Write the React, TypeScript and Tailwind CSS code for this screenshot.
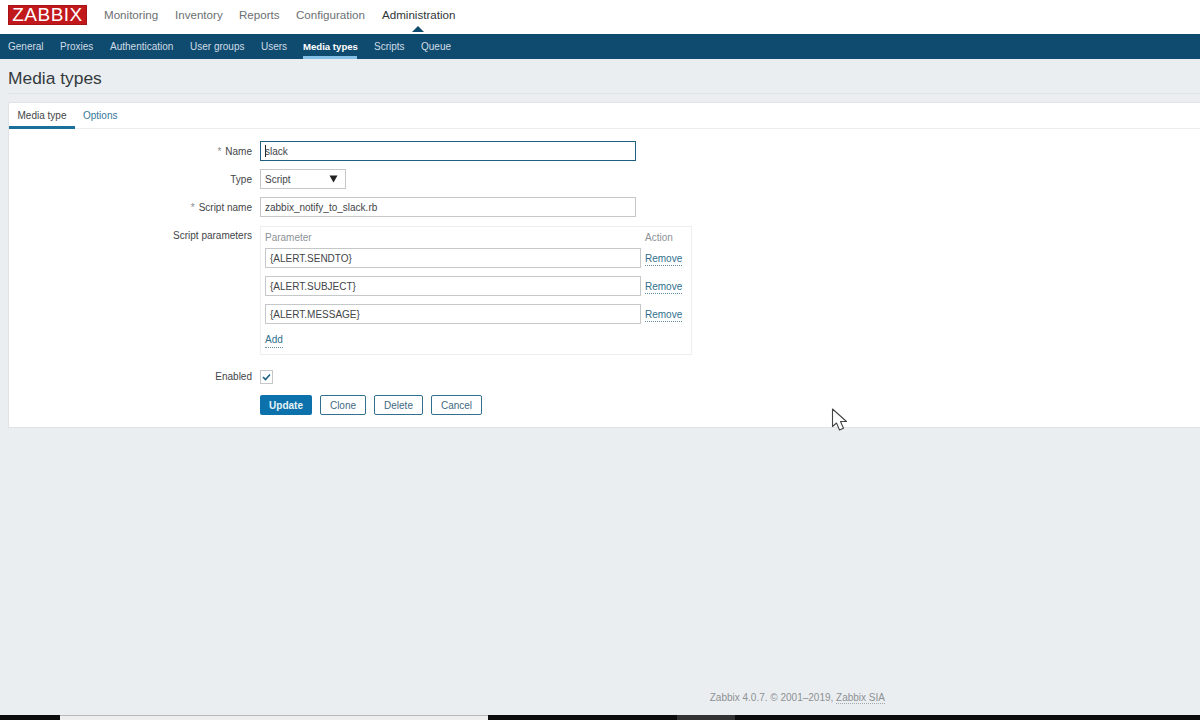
const font = "font-['Liberation_Sans',Arial,sans-serif]";

const mainNav = [
  { label: "Monitoring", width: "w-[71px]" },
  { label: "Inventory", width: "w-[64px]" },
  { label: "Reports", width: "w-[57px]" },
  { label: "Configuration", width: "w-[86px]" },
];

const subNav = [
  { label: "General", width: "w-[52px]" },
  { label: "Proxies", width: "w-[50px]" },
  { label: "Authentication", width: "w-[80px]" },
  { label: "User groups", width: "w-[71px]" },
  { label: "Users", width: "w-[42px]" },
];

function Row({ label, required, children }: { label: string; required?: boolean; children: React.ReactNode }) {
  return (
    <div className="flex items-start gap-2">
      <div className="w-[243px] h-5 flex items-center justify-end text-[10px] text-[#3f4548]">
        {required && <span className="text-[#8a8f92] mr-1">*</span>}
        {label}
      </div>
      {children}
    </div>
  );
}

function Field({ value, className }: { value: string; className: string }) {
  return (
    <div className={`h-5 flex items-center px-1 border border-[#c4c8c9] bg-white text-[10px] text-[#3f4548] ${className}`}>
      {value}
    </div>
  );
}

function Link({ children }: { children: React.ReactNode }) {
  return <span className="text-[10px] leading-[12px] text-[#2f6f8c] border-b border-dotted border-[#5f8ea5]">{children}</span>;
}

function Button({ label, width }: { label: string; width: string }) {
  return (
    <div className={`h-5 ${width} flex items-center justify-center rounded-[2px] border border-[#336f8f] bg-white text-[10px] text-[#40697f]`}>
      {label}
    </div>
  );
}

export default function App() {
  return (
    <div className={`relative w-[1200px] h-[720px] overflow-hidden flex flex-col bg-[#ebeef0] ${font}`}>
      <header className="h-[34px] shrink-0 bg-white flex items-center pl-2 pb-[4px]">
        <div className="w-[79px] h-[20px] bg-[#c1181c] flex items-center justify-center text-[19px] tracking-[0.5px] text-white border border-[#a81317] mr-[17px]">
          ZABBIX
        </div>
        {mainNav.map((item) => (
          <div key={item.label} className={`${item.width} text-[11.6px] text-[#6b6f72]`}>
            {item.label}
          </div>
        ))}
        <div className="relative text-[11.6px] text-[#2f3538]">
          Administration
          <div className="absolute left-[30px] top-[20px] w-0 h-0 border-x-[6px] border-x-transparent border-b-[6px] border-b-[#0f4b6f]" />
        </div>
      </header>

      <nav className="h-[25px] shrink-0 bg-[#0f4b6f] flex pl-2 text-[10px] leading-[25px] text-[#cfdde6]">
        {subNav.map((item) => (
          <div key={item.label} className={item.width}>
            {item.label}
          </div>
        ))}
        <div className="w-[71px]">
          <div className="w-[54px] h-[25px] whitespace-nowrap text-[9.6px] font-bold text-white border-b-[3px] border-[#84c1e4]">Media types</div>
        </div>
        <div className="w-[47px]">Scripts</div>
        <div>Queue</div>
      </nav>

      <main className="flex-1 pl-2">
        <div className="h-[35px] border-b border-[#e1e4e6] text-[17.4px] leading-[38px] text-[#333a3e]">Media types</div>

        <section className="mt-2 h-[326px] bg-white border border-r-0 border-[#e0e3e5] rounded-tl-[2px]">
          <div className="h-[26px] flex border-b border-[#ebeef0] text-[10px] leading-[26px]">
            <div className="w-[66px] h-[26px] text-center text-[#3f4548] border-b-[3px] border-[#1b6f9b]">Media type</div>
            <div className="ml-[8px] text-[#35789a]">Options</div>
          </div>

          <div className="pt-[12px] flex flex-col gap-2">
            <Row label="Name" required>
              <div className="w-[376px] h-5 flex items-center px-1 border border-[#1f5f7f] bg-white text-[10px] text-[#3f4548]">
                <span className="w-px h-3 bg-[#222] -mr-px" />
                slack
              </div>
            </Row>
            <Row label="Type">
              <div className="w-[86px] h-5 flex items-center justify-between pl-1 pr-[6px] border border-[#c4c8c9] bg-white text-[10px] text-[#3f4548]">
                Script
                <svg width="9" height="8" viewBox="0 0 9 8" className="mr-[1px]">
                  <path d="M0.5 0.5h8L4.5 7.5z" fill="#222" />
                </svg>
              </div>
            </Row>
            <Row label="Script name" required>
              <Field value="zabbix_notify_to_slack.rb" className="w-[376px]" />
            </Row>
            <Row label="Script parameters">
              <div className="w-[432px] h-[129px] mt-[1px] border border-[#eceef0] pl-1 pt-[3px]">
                <div className="flex h-[17px] text-[10px] text-[#8d9296]">
                  <div className="w-[380px]">Parameter</div>
                  <div>Action</div>
                </div>
                <div className="flex flex-col gap-2 mt-[1px]">
                  {["{ALERT.SENDTO}", "{ALERT.SUBJECT}", "{ALERT.MESSAGE}"].map((value) => (
                    <div key={value} className="flex items-center gap-1">
                      <Field value={value} className="w-[376px]" />
                      <span className="mt-[2px] flex">
                        <Link>Remove</Link>
                      </span>
                    </div>
                  ))}
                </div>
                <div className="mt-[10px] h-[14px] flex">
                  <Link>Add</Link>
                </div>
              </div>
            </Row>
            <div className="flex items-center gap-2 mt-[5px]">
              <div className="w-[243px] pt-[1px] text-right text-[10px] leading-[16px] text-[#3f4548]">Enabled</div>
              <div className="w-[13px] h-[14px] flex items-center justify-center border border-[#c4c8c9] bg-white">
                <svg width="9" height="8" viewBox="0 0 9 8">
                  <path d="M1 4l2.5 2.5L8 1.5" fill="none" stroke="#1b5f86" strokeWidth="1.6" />
                </svg>
              </div>
            </div>
            <div className="flex gap-2 ml-[251px] mt-[2px]">
              <div className="h-5 w-[52px] flex items-center justify-center rounded-[2px] bg-[#0d72ab] text-[10px] font-bold text-[#e8f2f8]">
                Update
              </div>
              <Button label="Clone" width="w-[46px]" />
              <Button label="Delete" width="w-[49px]" />
              <Button label="Cancel" width="w-[51px]" />
            </div>
          </div>
        </section>
      </main>

      <footer className="h-[23px] shrink-0 flex justify-end pr-[315px] text-[10px] leading-[12px] text-[#8b9195]">
        <span>
          Zabbix 4.0.7. © 2001–2019, <span className="border-b border-dotted border-[#a2a8ac]">Zabbix SIA</span>
        </span>
      </footer>

      <div className="h-[5px] shrink-0 flex bg-[#0c0c0c]">
        <div className="ml-[60px] w-[428px] bg-[#eeeeee] border-t border-[#b9b9b9]" />
        <div className="ml-[189px] w-[58px] bg-[#333333]" />
      </div>

      <svg width="18" height="25" viewBox="0 0 18 25" className="absolute left-[831px] top-[408px]">
        <path d="M1.5 1v17.5l4-3.5 3 7 4-1.8-3-6.7h6z" fill="white" stroke="#444" strokeWidth="1.1" strokeLinejoin="round" />
      </svg>
    </div>
  );
}
